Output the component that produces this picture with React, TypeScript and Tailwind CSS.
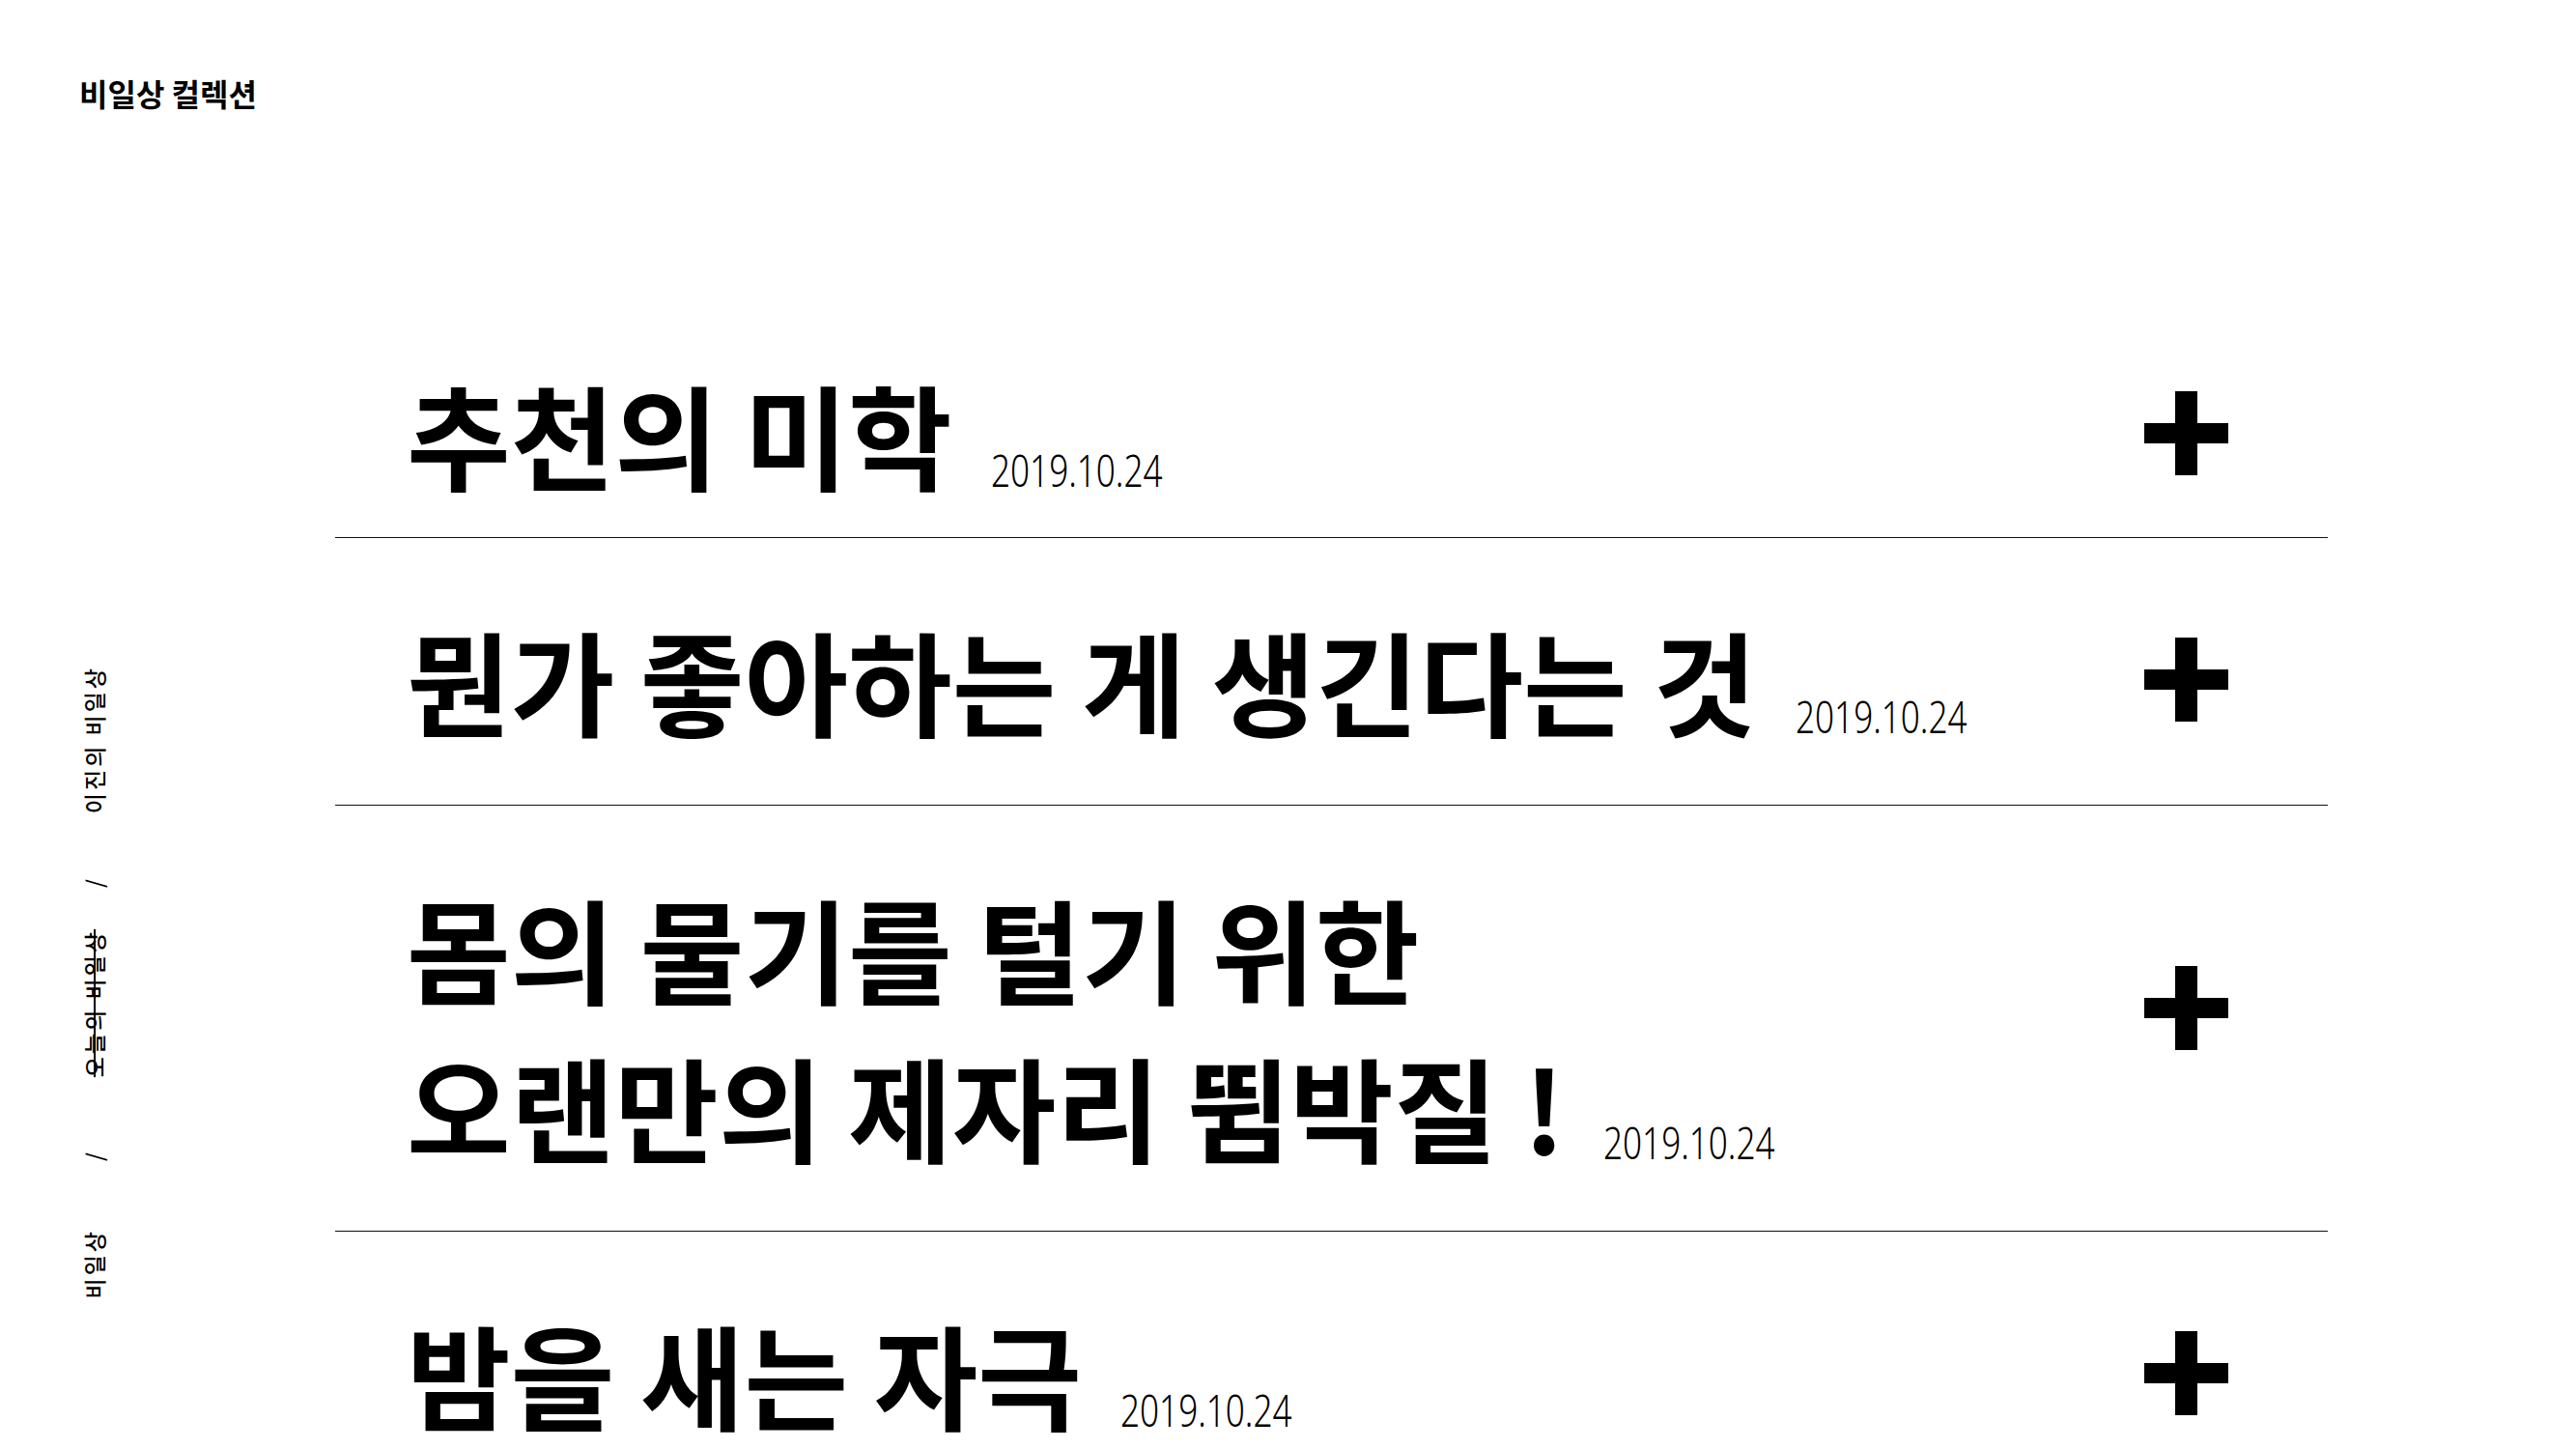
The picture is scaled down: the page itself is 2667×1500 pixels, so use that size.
import React from "react";

const rows: { lines: string[]; date: string }[] = [
  { lines: ["추천의 미학"], date: "2019.10.24" },
  { lines: ["뭔가 좋아하는 게 생긴다는 것"], date: "2019.10.24" },
  { lines: ["몸의 물기를 털기 위한", "오랜만의 제자리 뜀박질 !"], date: "2019.10.24" },
  { lines: ["밤을 새는 자극"], date: "2019.10.24" },
];

function Plus({ lift }: { lift?: boolean }) {
  return (
    <svg
      width="87"
      height="87"
      viewBox="0 0 87 87"
      className={"shrink-0 " + (lift ? "mb-[38px]" : "")}
    >
      <rect x="32" y="0" width="23" height="87" fill="#000" />
      <rect x="0" y="33" width="87" height="21" fill="#000" />
    </svg>
  );
}

function VText({
  children,
  strike,
  className = "",
}: {
  children: React.ReactNode;
  strike?: boolean;
  className?: string;
}) {
  return (
    <span
      className={
        "block rotate-180 [writing-mode:vertical-rl] [text-orientation:sideways] text-[23px] tracking-[3px] leading-[32px] font-medium " +
        (strike ? "line-through " : "") +
        className
      }
    >
      {children}
    </span>
  );
}

export default function App() {
  return (
    <div className="min-h-screen bg-white text-black font-['Noto_Sans_CJK_KR','Noto_Sans',sans-serif]">
      <header className="pl-[82px] pt-[73px]">
        <h1 className="text-[32px] font-bold leading-[46px]">비일상 컬렉션</h1>
      </header>

      <div className="flex">
        <aside className="w-[347px] shrink-0 pt-[570px] pl-[81px]">
          <nav className="flex flex-col items-center w-[32px]">
            <VText>이진의 비일상</VText>
            <VText className="mt-[65px]">/</VText>
            <VText strike className="mt-[43px]">
              오늘의 비일상
            </VText>
            <VText className="mt-[75px]">/</VText>
            <VText className="mt-[70px]">비일상</VText>
          </nav>
        </aside>

        <main className="w-[2063px] shrink-0 pt-[161px]">
          {rows.map((r, i) => (
            <section
              key={i}
              className="flex items-center justify-between border-b border-[#111] pl-[74px] pr-[103px] pt-[64px] pb-[48px] first:pt-[86px] first:pb-[26px]"
            >
              <h2 className="text-[117px] font-bold leading-[164px]">
                {r.lines.map((l, j) => (
                  <React.Fragment key={j}>
                    {j > 0 && <br />}
                    {l}
                  </React.Fragment>
                ))}
                <span className="ml-[40px] inline-block origin-left scale-x-[0.78] align-[-5px] text-[45px] font-light leading-none font-['Noto_Sans','DejaVu_Sans',sans-serif]">
                  {r.date}
                </span>
              </h2>
              <Plus lift={r.lines.length > 1} />
            </section>
          ))}
        </main>
      </div>
    </div>
  );
}
